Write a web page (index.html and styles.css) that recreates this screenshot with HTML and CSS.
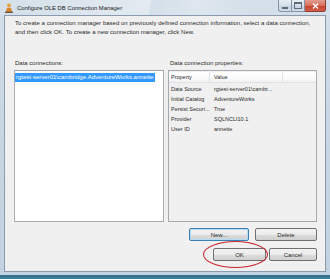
FILE: index.html
```html
<!DOCTYPE html>
<html lang="en">
<head>
    <meta charset="UTF-8">
    <title>Configure OLE DB Connection Manager</title>
    <link rel="stylesheet" href="styles.css">
</head>
<body>
    <div class="window">
        <div class="titlebar">
            <svg class="app-icon" width="8" height="10" viewBox="0 0 8 10">
                <circle cx="4" cy="2.5" r="2" fill="#e9a23b"/>
                <path d="M1 9 L1.6 5.4 Q4 4.2 6.4 5.4 L7 9 Z" fill="#d9822b"/>
                <rect x="0" y="8.6" width="8" height="1.4" fill="#6b5a3a"/>
            </svg>
            <span class="title">Configure OLE DB Connection Manager</span>
            <div class="caption-buttons">
                <span class="cap cap-min"><span class="glyph-min"></span></span>
                <span class="cap cap-max"><span class="glyph-max"></span></span>
                <span class="cap cap-close">
                    <svg width="7" height="6" viewBox="0 0 7 6">
                        <path d="M1 0.5 L6 5.5 M6 0.5 L1 5.5" stroke="#fff" stroke-width="1.4"/>
                    </svg>
                </span>
            </div>
        </div>
        <div class="client">
            <p class="intro">To create a connection manager based on previously defined connection information, select a data connection,<br>and then click OK. To create a new connection manager, click New.</p>
            <div class="panes">
                <div class="pane pane-left">
                    <div class="label">Data connections:</div>
                    <div class="listbox">
                        <div class="item selected">rgtest-server01\cambridge.AdventureWorks.annette</div>
                    </div>
                </div>
                <div class="pane pane-right">
                    <div class="label">Data connection properties:</div>
                    <div class="grid">
                        <div class="grid-row grid-head">
                            <span class="col-prop">Property</span>
                            <span class="col-val">Value</span>
                            <span class="col-rest"></span>
                        </div>
                        <div class="grid-row"><span class="col-prop">Data Source</span><span class="col-val">rgtest-server01\cambr...</span></div>
                        <div class="grid-row"><span class="col-prop">Initial Catalog</span><span class="col-val">AdventureWorks</span></div>
                        <div class="grid-row"><span class="col-prop">Persist Securi...</span><span class="col-val">True</span></div>
                        <div class="grid-row"><span class="col-prop">Provider</span><span class="col-val">SQLNCLI10.1</span></div>
                        <div class="grid-row"><span class="col-prop">User ID</span><span class="col-val">annette</span></div>
                    </div>
                </div>
            </div>
            <div class="actions actions-top">
                <button class="btn btn-new" type="button">New...</button>
                <button class="btn btn-delete" type="button">Delete</button>
            </div>
            <div class="actions actions-bottom">
                <span class="ok-wrap">
                    <button class="btn btn-ok" type="button">OK</button>
                    <span class="highlight-ring"></span>
                </span>
                <button class="btn btn-cancel" type="button">Cancel</button>
            </div>
        </div>
    </div>
</body>
</html>
```

FILE: styles.css
```css
html, body {
    margin: 0;
    padding: 0;
}
body {
    width: 330px;
    height: 279px;
    overflow: hidden;
    font-family: "Liberation Sans", Arial, sans-serif;
    font-size: 6px;
    color: #2b2b2b;
    background: #3a7f99;
}
.window {
    width: 330px;
    height: 277px;
    box-sizing: border-box;
    padding: 0 4px 3px 4px;
    background: linear-gradient(180deg, #d5e0ea 0%, #c9d7e4 40%, #c3d2e0 100%);
    border-bottom: 2px solid #336f88;
    display: flex;
    flex-direction: column;
}

/* title bar */
.titlebar {
    height: 17px;
    display: flex;
    align-items: center;
    background: linear-gradient(100deg, rgba(255,255,255,0) 0%, rgba(255,255,255,0.35) 45%, rgba(255,255,255,0) 46%, rgba(255,255,255,0.25) 60%, rgba(255,255,255,0) 75%);
    margin: 0 -4px;
    padding: 0 4px;
}
.app-icon {
    margin-left: 1px;
    margin-right: 4px;
}
.title {
    font-size: 5.9px;
    color: #222;
}
.caption-buttons {
    margin-left: auto;
    align-self: flex-start;
    display: flex;
}
.cap {
    height: 12px;
    display: flex;
    align-items: center;
    justify-content: center;
    box-sizing: border-box;
    border: 1px solid #8394a6;
    border-top: none;
}
.cap-min {
    width: 14px;
    border-radius: 0 0 0 3px;
    background: linear-gradient(180deg, #e7edf3 0%, #d7e0e9 50%, #c4d0dc 51%, #d3dde6 100%);
}
.cap-max {
    width: 13px;
    border-left: none;
    background: linear-gradient(180deg, #e7edf3 0%, #d7e0e9 50%, #c4d0dc 51%, #d3dde6 100%);
}
.cap-close {
    width: 21px;
    border-left: none;
    border-radius: 0 0 3px 0;
    border-color: #8e3b30;
    background: linear-gradient(180deg, #e49d90 0%, #d8705e 50%, #c5412b 51%, #d1604a 100%);
}
.glyph-min {
    width: 6px;
    height: 2px;
    margin-top: 4px;
    background: #5d6d7c;
}
.glyph-max {
    width: 6px;
    height: 4px;
    border: 1px solid #5d6d7c;
    border-top-width: 2px;
}

/* client area */
.client {
    flex: 1;
    background: #f0f0f0;
    border: 1px solid #8a9bad;
    box-sizing: border-box;
    padding: 3px 8px 10px 9px;
    display: flex;
    flex-direction: column;
}
.intro {
    margin: 0 0 0 1px;
    line-height: 9px;
    font-size: 6px;
    word-spacing: 0.1px;
    white-space: nowrap;
}
.panes {
    margin-top: 22px;
    display: flex;
    gap: 4px;
}
.pane {
    display: flex;
    flex-direction: column;
}
.pane-left {
    width: 150px;
}
.pane-right {
    width: 149px;
}
.label {
    line-height: 9px;
    margin-bottom: 2px;
    padding-left: 1px;
}
.pane-right .label {
    padding-left: 2px;
}
.listbox {
    height: 152px;
    box-sizing: border-box;
    border: 1px solid #abadb3;
    border-top-color: #9fa3aa;
    background: #fff;
    padding: 2px 0;
}
.item {
    display: inline-block;
    line-height: 9px;
    padding: 0 1px;
    white-space: nowrap;
}
.item.selected {
    background: #3399ff;
    color: #fff;
}

/* property grid */
.grid {
    height: 152px;
    box-sizing: border-box;
    border: 1px solid #a7a9ae;
    background: #f0f0f0;
    padding-top: 1px;
    font-size: 5.5px;
}
.grid-row {
    display: flex;
    height: 10px;
    line-height: 10px;
    white-space: nowrap;
}
.grid-head {
    margin-bottom: 1px;
    background: linear-gradient(180deg, #ffffff 0%, #fafafa 60%, #f0f1f3 100%);
    border-bottom: 1px solid #e0e2e5;
}
.grid-head span {
    border-right: 1px solid #e3e4e6;
}
.col-prop {
    width: 41px;
    padding-left: 2px;
    box-sizing: border-box;
}
.col-val {
    width: 73px;
    padding-left: 4px;
    box-sizing: border-box;
}
.col-rest {
    flex: 1;
    border-right: none !important;
}

/* buttons */
.actions {
    display: flex;
    justify-content: flex-end;
}
.actions-top {
    margin-top: 6px;
    gap: 6px;
}
.actions-bottom {
    margin-top: 7px;
    gap: 3px;
}
.btn {
    height: 13px;
    padding: 0;
    font-family: inherit;
    font-size: 6px;
    color: #2b2b2b;
    border: 1px solid #707070;
    border-radius: 2px;
    background: linear-gradient(180deg, #f2f2f2 0%, #ebebeb 50%, #dddddd 51%, #cfcfcf 100%);
    box-sizing: border-box;
}
.btn-new {
    width: 60px;
    border-color: #3c7fb1;
    box-shadow: inset 0 0 0 1px #b4dcf5;
}
.btn-delete {
    width: 62px;
}
.btn-ok {
    width: 53px;
}
.btn-cancel {
    width: 48px;
}
.ok-wrap {
    position: relative;
    display: flex;
}
.highlight-ring {
    position: absolute;
    left: -10px;
    top: -7px;
    width: 65px;
    height: 27px;
    box-sizing: border-box;
    border: 1.5px solid #c8262c;
    border-radius: 50%;
    pointer-events: none;
}
```
